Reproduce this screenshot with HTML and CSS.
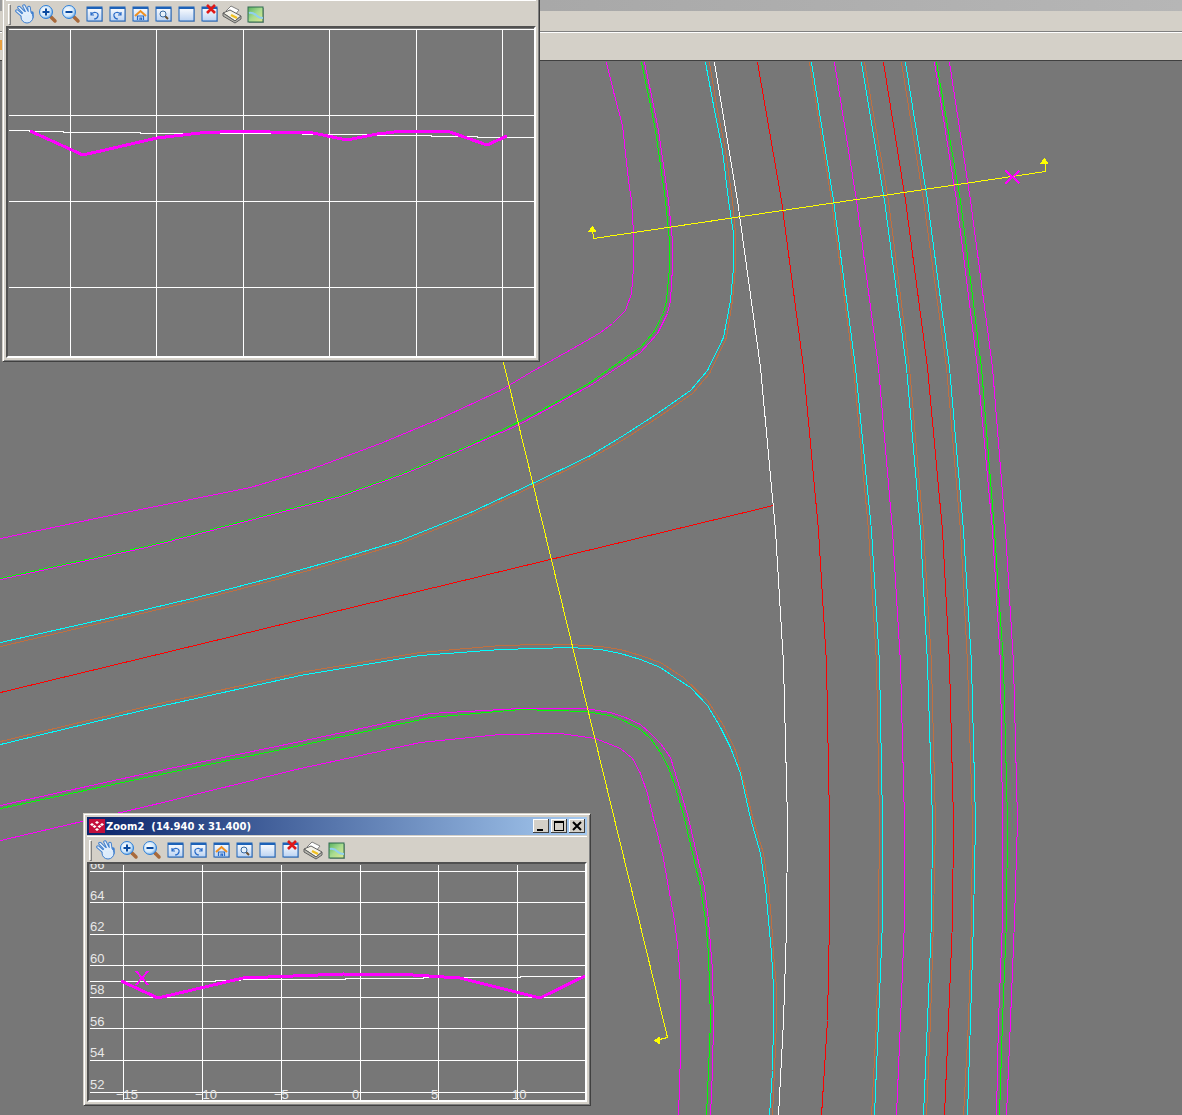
FILE: index.html
```html
<!DOCTYPE html>
<html lang="en">
<head>
<meta charset="utf-8">
<title>Zoom2</title>
<link rel="stylesheet" href="styles.css">
</head>
<body>
<svg class="defs" width="0" height="0" aria-hidden="true">
  <defs>
    <linearGradient id="paper" x1="0" y1="0" x2="0" y2="1"><stop offset="0" stop-color="#ffffff"/><stop offset="1" stop-color="#bcd3f2"/></linearGradient>
    <radialGradient id="lens" cx="0.4" cy="0.4" r="0.7"><stop offset="0" stop-color="#ffffff"/><stop offset="0.6" stop-color="#cfe6fa"/><stop offset="1" stop-color="#3f8fe0"/></radialGradient>
    <linearGradient id="mapfill" x1="0" y1="0" x2="1" y2="1"><stop offset="0" stop-color="#58b060"/><stop offset="0.5" stop-color="#a8dc90"/><stop offset="1" stop-color="#e0e890"/></linearGradient>
    <symbol id="box" viewBox="0 0 20 20">
      <rect x="4" y="4" width="15" height="14" fill="#a0a8b4"/>
      <rect x="3" y="3" width="15" height="14" fill="url(#paper)" stroke="#1d62b8"/>
      <rect x="3" y="3" width="15" height="2" fill="#1d62b8"/>
    </symbol>
    <symbol id="i-hand" viewBox="0 0 20 20">
      <g class="hand-out"><path d="M2 7l7 6M4 3.500l7 7M9 2l4 8M14 3.500l1 7M17 9l0 4"/></g>
      <circle cx="12" cy="13" r="6" fill="#dcebfb" stroke="#3f7fcf"/>
      <g class="hand-in"><path d="M2 7l7 6M4 3.500l7 7M9 2l4 8M14 3.500l1 7"/></g>
    </symbol>
    <symbol id="i-plus" viewBox="0 0 20 20">
      <path class="handle" d="M13 13l4 4"/>
      <circle cx="8" cy="8" r="6.500" fill="url(#lens)" stroke="#2f80d8"/>
      <path class="lens-mark" d="M4.500 8h7M8 4.500v7"/>
    </symbol>
    <symbol id="i-minus" viewBox="0 0 20 20">
      <path class="handle" d="M13 13l4 4"/>
      <circle cx="8" cy="8" r="6.500" fill="url(#lens)" stroke="#2f80d8"/>
      <path class="lens-mark" d="M4.500 8h7"/>
    </symbol>
    <symbol id="i-undo" viewBox="0 0 20 20">
      <use href="#box"/>
      <path class="arrow" d="M7 8v3h3M7 11c2-4 8-3 7 1c-.5 2-2 3-4 3"/>
    </symbol>
    <symbol id="i-redo" viewBox="0 0 20 20">
      <use href="#box"/>
      <path class="arrow" d="M14 8v3h-3M14 11c-2-4-8-3-7 1c.5 2 2 3 4 3"/>
    </symbol>
    <symbol id="i-home" viewBox="0 0 20 20">
      <use href="#box"/>
      <path class="roof" d="M5 12l5.500-5l5.500 5"/>
      <path class="arrow" d="M7.500 16v-4h6v4M10 16v-2h1.500v2"/>
    </symbol>
    <symbol id="i-find" viewBox="0 0 20 20">
      <use href="#box"/>
      <path class="handle-s" d="M12 12l3 3"/>
      <circle cx="10" cy="10" r="3" fill="#e8f2fb" stroke="#3a6aa0"/>
    </symbol>
    <symbol id="i-blank" viewBox="0 0 20 20">
      <use href="#box"/>
    </symbol>
    <symbol id="i-del" viewBox="0 0 20 20">
      <use href="#box"/>
      <path class="red-x" d="M8 1l8 8M16 1l-8 8"/>
    </symbol>
    <symbol id="i-print" viewBox="0 0 20 20">
      <path d="M4 7l5-5l8 4l-4 5z" fill="#ffffff" stroke="#808080"/>
      <path d="M1 9l7-3l11 6l-6 5z" fill="#f4f2e8" stroke="#606060"/>
      <path d="M1 9v3l12 7l6-4v-3l-6 5z" fill="#b8b8b0" stroke="#606060"/>
      <path d="M9 11l6 3" stroke="#f0c020" stroke-width="2.500" fill="none"/>
    </symbol>
    <symbol id="i-map" viewBox="0 0 20 20">
      <rect x="4" y="4" width="15" height="15" fill="#909890"/>
      <rect x="3" y="3" width="15" height="15" fill="url(#mapfill)" stroke="#2f6a50"/>
      <path d="M4 9c4-1 6 1 8 3s4 2 6 2" stroke="#90d0f0" stroke-width="2" fill="none"/>
    </symbol>
  </defs>
</svg>

<div class="desktop">
  <div class="app-band"></div>
  <div class="app-menu"></div>
  <div class="app-tools"><span class="app-icon"></span></div>

  <svg class="plan" viewBox="0 61 1182 1054" width="1182" height="1054">
    <g class="lines">
      <polyline class="mag" points="606,62 614,95 622,125 628,180 631,200 633,233 633,267 631,293 625,310 612,323 600,332 590,338 530,372 500,390 440,418 380,443 310,469 250,487 170,503 100,517 0,538"/>
      <polyline class="mag" points="644,62 651,95 658,130 668,200 672,240 672,267 670,300 667,313 657,333 640,352 617,367 590,385 550,407 517,425 460,450 400,475 340,496 280,512 150,546 0,579"/>
      <polyline class="grn" points="641,62 648,95 655,130 665,200 669,240 669,267 666,300 663,313 653,332 640,347 617,363 590,382 550,405 515,423 460,449 400,474 340,495 280,511 150,545 0,578"/>
      <polyline class="org" points="709,62 717,110 725,150 732,200 735,233 735,267 732,300 726,337 709,373 692,393 659,416 625,438 590,458 530,487 470,515 400,543 340,561 280,578 200,599 120,618 0,646"/>
      <polyline class="cyn" points="705,62 714,110 722,150 728,200 733,233 733,267 730,300 723,337 707,370 690,390 657,413 623,435 590,455 530,484 470,512 400,540 340,558 280,575 200,596 120,615 0,642"/>
      <polyline class="org" points="0,741 150,705 300,672 420,652 500,645 540,644 570,644 600,646 620,649 640,655 660,662 683,677 707,700 723,725 735,750 743,780 753,820 763,853 768,887 771,920 773,953 776,987 776,1020 774,1070 772,1115"/>
      <polyline class="cyn" points="0,744 150,708 300,675 420,655 500,649 570,647 600,649 620,653 640,659 660,667 673,676 690,687 707,705 720,727 730,747 740,773 750,818 760,853 765,887 768,920 771,953 773,987 773,1020 772,1070 769,1115"/>
      <polyline class="mag" points="0,805 150,772 300,741 430,713 520,708 585,708 610,712 625,717 640,724 650,733 660,743 670,757 677,780 688,818 704,887 708,920 712,970 713,1020 712,1070 710,1115"/>
      <polyline class="grn" points="0,808 150,776 300,745 430,717 520,709 585,711 610,715 625,721 640,729 650,738 660,752 668,767 675,787 684,818 700,887 705,920 708,953 710,1020 708,1070 706,1115"/>
      <polyline class="mag" points="0,840 150,805 300,768 420,742 500,734 560,733 595,738 620,748 632,758 640,773 647,793 653,818 662,853 668,887 674,920 678,953 680,987 680,1053 678,1115"/>
      <polyline class="red" points="0,692 773,505"/>
      <polyline class="wht" points="714,62 737,200 760,367 775,530 783,663 787,820 786,928 783,1020 778,1115"/>
      <polyline class="red" points="757,62 781,200 803,367 818,530 826,663 829,820 829,920 827,1020 821,1115"/>
      <polyline class="org" points="809,62 831,200 853,367 868,530 876,663 879,820 878,920 876,1020 871,1115"/>
      <polyline class="cyn" points="811,62 833,200 855,367 871,530 879,663 882,820 882,920 878,1020 874,1115"/>
      <polyline class="mag" points="834,62 856,200 878,367 892,530 900,663 904,820 904,920 900,1020 896,1115"/>
      <polyline class="cyn" points="861,62 884,200 906,367 920,530 927,663 932,820 931,920 927,1020 923,1115"/>
      <polyline class="org" points="864,62 888,200 909,367 923,530 931,663 935,820 933,920 930,1020 926,1115"/>
      <polyline class="red" points="883,62 905,200 927,367 942,530 949,663 953,820 952,920 948,1020 944,1115"/>
      <polyline class="org" points="901,62 923,200 946,367 960,530 967,663 972,820 971,920 968,1020 963,1115"/>
      <polyline class="cyn" points="905,62 927,200 949,367 963,530 971,663 975,820 973,920 970,1020 967,1115"/>
      <polyline class="mag" points="934,62 956,200 977,367 992,530 1000,663 1002,820 1002,920 998,1020 996,1115"/>
      <polyline class="grn" points="936,62 960,200 981,367 994,530 1003,663 1007,820 1006,920 1002,1020 999,1115"/>
      <polyline class="mag" points="949,62 970,200 992,367 1005,530 1013,663 1017,820 1014,920 1010,1020 1006,1115"/>
      <polyline class="yel" points="592,228 593,238 1045,171 1045,158"/>
      <polygon class="yel-head" points="1044,157 1040,163 1048,163"/>
      <polygon class="yel-head" points="592,225 588,231 596,231"/>
      <polyline class="yel" points="503,362 667,1037 655,1040"/>
      <polygon class="yel-head" points="653,1040 659,1036 659,1044"/>
      <path class="mark" d="M1005 170l14 13M1019 170l-14 13"/>
    </g>
  </svg>

  <section class="window window-top">
    <div class="toolbar">
      <span class="grip"></span>
      <svg class="tool"><use href="#i-hand"/></svg>
      <svg class="tool"><use href="#i-plus"/></svg>
      <svg class="tool"><use href="#i-minus"/></svg>
      <svg class="tool"><use href="#i-undo"/></svg>
      <svg class="tool"><use href="#i-redo"/></svg>
      <svg class="tool"><use href="#i-home"/></svg>
      <svg class="tool"><use href="#i-find"/></svg>
      <svg class="tool"><use href="#i-blank"/></svg>
      <svg class="tool"><use href="#i-del"/></svg>
      <svg class="tool"><use href="#i-print"/></svg>
      <svg class="tool"><use href="#i-map"/></svg>
    </div>
    <div class="graph">
      <svg class="chart" viewBox="8 28 526 328" width="526" height="328">
        <path class="grid" d="M70 28V356M156 28V356M243 28V356M329 28V356M416 28V356M502 28V356M8 29H534M8 115H534M8 201H534M8 287H534"/>
        <polyline class="prof" points="8,130 29,130 29,131 63,131 63,132 140,132 140,133 270,133 302,133 302,134 374,134 374,135 431,135 431,136 477,136 477,137 534,137"/>
        <polyline class="road" points="30,131 83,155 157,138 200,133 240,131 270,132 313,133 347,140 377,134 403,131 447,131 487,145 507,136"/>
      </svg>
    </div>
  </section>

  <section class="window window-zoom">
    <header class="titlebar">
      <svg class="app-logo" viewBox="0 0 16 14" width="16" height="14">
        <rect width="16" height="14" fill="#c4103c"/>
        <path d="M3 4l2 1.500l-2 1.500l-2-1.500zM8 2l2 1.500l-2 1.500l-2-1.500zM13 4l2 1.500l-2 1.500l-2-1.500zM5.500 6l2 1.500l-2 1.500l-2-1.500zM10.500 6l2 1.500l-2 1.500l-2-1.500zM8 9l2 1.500l-2 1.500l-2-1.500z" fill="#ffffff"/>
      </svg>
      <span class="title-text">Zoom2  (14.940 x 31.400)</span>
      <div class="caption">
        <span class="cap-btn"><svg viewBox="0 0 16 14" width="16" height="14"><path d="M4 10.500h6" class="cap-thick"/></svg></span>
        <span class="cap-btn"><svg viewBox="0 0 16 14" width="16" height="14"><path d="M3.500 2.500h9v9h-9zM3 3h10" class="cap-line"/></svg></span>
        <span class="cap-btn cap-close"><svg viewBox="0 0 16 14" width="16" height="14"><path d="M4 3l8 8M12 3l-8 8" class="cap-x"/></svg></span>
      </div>
    </header>
    <div class="toolbar">
      <span class="grip"></span>
      <svg class="tool"><use href="#i-hand"/></svg>
      <svg class="tool"><use href="#i-plus"/></svg>
      <svg class="tool"><use href="#i-minus"/></svg>
      <svg class="tool"><use href="#i-undo"/></svg>
      <svg class="tool"><use href="#i-redo"/></svg>
      <svg class="tool"><use href="#i-home"/></svg>
      <svg class="tool"><use href="#i-find"/></svg>
      <svg class="tool"><use href="#i-blank"/></svg>
      <svg class="tool"><use href="#i-del"/></svg>
      <svg class="tool"><use href="#i-print"/></svg>
      <svg class="tool"><use href="#i-map"/></svg>
    </div>
    <div class="graph">
      <svg class="chart" viewBox="89 864 496 236" width="496" height="236">
        <path class="grid" d="M123 864V1100M202 864V1100M281 864V1100M360 864V1100M438 864V1100M517 864V1100M89 871H585M89 902H585M89 934H585M89 965H585M89 997H585M89 1028H585M89 1060H585M89 1092H585"/>
        <polyline class="prof" points="89,981 215,981 215,980 240,980 240,979 345,979 345,978 423,978 423,977 520,977 520,976 585,976"/>
        <polyline class="road" points="121,981 158,998 243,978 343,974 413,975 460,978 540,998 585,976"/>
        <path class="mark" d="M136 971l12 14M148 971l-12 14"/>
        <g class="ticks">
          <text x="90" y="869">66</text>
          <text x="90" y="900">64</text>
          <text x="90" y="931">62</text>
          <text x="90" y="963">60</text>
          <text x="90" y="994">58</text>
          <text x="90" y="1026">56</text>
          <text x="90" y="1057">54</text>
          <text x="90" y="1089">52</text>
          <text x="116" y="1099">−15</text>
          <text x="195" y="1099">−10</text>
          <text x="274" y="1099">−5</text>
          <text x="352" y="1099">0</text>
          <text x="431" y="1099">5</text>
          <text x="512" y="1099">10</text>
        </g>
      </svg>
    </div>
  </section>
</div>
</body>
</html>
```
FILE: styles.css
```css
html, body {
  margin: 0;
  padding: 0;
  width: 1182px;
  height: 1115px;
  overflow: hidden;
  background: #777777;
  font-family: "DejaVu Sans", sans-serif;
}
.defs { position: absolute; }
.desktop {
  position: relative;
  display: flex;
  flex-direction: column;
  width: 1182px;
  height: 1115px;
  overflow: hidden;
}

/* Main application chrome */
.app-band {
  height: 11px;
  background: linear-gradient(90deg, #9c9c9c, #b6b6b6);
}
.app-menu {
  height: 20px;
  background: #d4d0c8;
  border-bottom: 1px solid #808080;
}
.app-tools {
  height: 27px;
  background: #d4d0c8;
  border-top: 1px solid #ffffff;
  border-bottom: 1px solid #404040;
}
.app-icon {
  display: block;
  width: 2px;
  height: 10px;
  margin-top: 7px;
  background: #e8a040;
}

/* Plan drawing */
.plan {
  display: block;
  background: #777777;
  flex: none;
}
.lines { transform: translate(.5px, .5px); }
.lines polyline {
  fill: none;
  stroke-width: 1;
  shape-rendering: crispEdges;
}
.mag { stroke: #ff00ff; }
.grn { stroke: #00ff00; }
.cyn { stroke: #00ffff; }
.org { stroke: #c07040; }
.red { stroke: #ff0000; }
.wht { stroke: #ffffff; }
.yel { stroke: #ffff00; }
.yel-head { fill: #ffff00; shape-rendering: crispEdges; }
.mark {
  fill: none;
  stroke: #ff00ff;
  stroke-width: 2;
  shape-rendering: crispEdges;
}

/* Floating windows */
.window {
  position: absolute;
  display: flex;
  flex-direction: column;
  box-sizing: border-box;
  padding: 3px;
  background: #d4d0c8;
  border: 1px solid;
  border-color: #d4d0c8 #404040 #404040 #d4d0c8;
  box-shadow: inset 1px 1px 0 #ffffff, inset -1px -1px 0 #808080;
}
.window-top {
  left: 2px;
  top: -24px;
  width: 538px;
  height: 386px;
  padding-top: 22px;
}
.window-zoom {
  left: 83px;
  top: 813px;
  width: 508px;
  height: 293px;
}

.titlebar {
  display: flex;
  align-items: center;
  height: 18px;
  flex: none;
  padding-left: 2px;
  background: linear-gradient(90deg, #0a246a, #a6caf0);
}
.app-logo { flex: none; }
.title-text {
  margin-left: 1px;
  color: #ffffff;
  font: bold 10px "DejaVu Sans", sans-serif;
  white-space: pre;
}
.caption {
  display: flex;
  gap: 2px;
  margin-left: auto;
  margin-right: 2px;
}
.cap-btn {
  display: block;
  width: 16px;
  height: 14px;
  background: #d4d0c8;
  box-shadow: inset -1px -1px 0 #404040, inset 1px 1px 0 #ffffff;
}
.cap-btn svg { display: block; }
.cap-thick { stroke: #000; stroke-width: 2; fill: none; shape-rendering: crispEdges; }
.cap-line { stroke: #000; stroke-width: 1; fill: none; shape-rendering: crispEdges; }
.cap-x { stroke: #000; stroke-width: 2; fill: none; }

.toolbar {
  display: flex;
  align-items: center;
  gap: 3px;
  flex: none;
  height: 25px;
  margin-top: 1px;
  padding-left: 2px;
  border-top: 1px solid #ffffff;
}
.grip {
  flex: none;
  width: 2px;
  height: 20px;
  margin-right: 2px;
  background: #d4d0c8;
  box-shadow: inset 1px 1px 0 #ffffff, 1px 1px 0 #808080;
}
.tool {
  flex: none;
  display: block;
  width: 20px;
  height: 20px;
}
.hand-out path { fill: none; stroke: #3f7fcf; stroke-width: 3.5; stroke-linecap: round; }
.hand-in path { fill: none; stroke: #e4effb; stroke-width: 1.6; stroke-linecap: round; }
.handle { fill: none; stroke: #a86a3c; stroke-width: 3.5; stroke-linecap: round; }
.handle-s { fill: none; stroke: #6a5030; stroke-width: 2; }
.lens-mark { fill: none; stroke: #0a4aa0; stroke-width: 2; }
.arrow { fill: none; stroke: #2a6cc8; stroke-width: 1.2; }
.roof { fill: none; stroke: #f09020; stroke-width: 2; }
.red-x { fill: none; stroke: #e01818; stroke-width: 2.6; }

.graph {
  flex: none;
  border: 2px solid;
  border-color: #505050 #ffffff #ffffff #505050;
}
.chart {
  display: block;
  background: #777777;
  overflow: hidden;
}
.grid {
  fill: none;
  stroke: #ffffff;
  stroke-width: 1;
  transform: translate(.5px, .5px);
  shape-rendering: crispEdges;
}
.prof {
  fill: none;
  stroke: #ffffff;
  stroke-width: 1;
  transform: translate(.5px, .5px);
  shape-rendering: crispEdges;
}
.road {
  fill: none;
  stroke: #ff00ff;
  stroke-width: 3;
  shape-rendering: crispEdges;
}
.ticks text {
  fill: #e8e8e8;
  font: 13px "Liberation Sans", sans-serif;
}
```
